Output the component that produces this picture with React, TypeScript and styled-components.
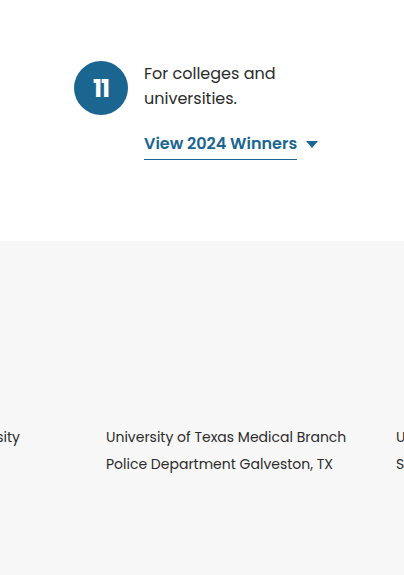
import * as React from "react";
import styled, { createGlobalStyle } from "styled-components";

const GlobalStyle = createGlobalStyle`
  html, body {
    margin: 0;
    padding: 0;
    background: #ffffff;
  }
  body {
    font-family: Poppins, "Open Sans", "Liberation Sans", sans-serif;
    color: #2b2b2b;
    -webkit-font-smoothing: antialiased;
  }
`;

const Page = styled.div`
  width: 404px;
  height: 575px;
  display: flex;
  flex-direction: column;
  overflow: hidden;
`;

const Intro = styled.section`
  height: 241px;
  box-sizing: border-box;
  padding: 61px 0 0 74px;
  background: #ffffff;
`;

const Feature = styled.div`
  display: flex;
  align-items: flex-start;
  gap: 16px;
`;

const Badge = styled.div`
  flex: 0 0 54px;
  width: 54px;
  height: 54px;
  border-radius: 50%;
  background: #1a6690;
  color: #ffffff;
  display: flex;
  align-items: center;
  justify-content: center;
  font-size: 24px;
  font-weight: 700;
  letter-spacing: -1px;
`;

const Copy = styled.div`
  display: flex;
  flex-direction: column;
  align-items: flex-start;
`;

const Lead = styled.p`
  margin: 0;
  font-size: 16px;
  line-height: 25px;
  color: #2b2b2b;
`;

const Toggle = styled.button`
  margin-top: 21px;
  padding: 0;
  border: 0;
  background: none;
  display: flex;
  align-items: center;
  gap: 9px;
  cursor: pointer;
  font-family: inherit;
`;

const ToggleLabel = styled.span`
  font-size: 16px;
  line-height: 24px;
  font-weight: 600;
  color: #1a6690;
  padding-bottom: 3px;
  border-bottom: 1px solid #1a6690;
`;

const Caret = styled.svg`
  width: 12px;
  height: 7px;
  margin-bottom: 3px;
`;

const Winners = styled.section`
  flex: 1;
  background: #f7f7f7;
  padding-top: 183px;
  overflow: hidden;
`;

const Track = styled.div`
  display: flex;
  gap: 30px;
  margin-left: -184px;
`;

const Winner = styled.div`
  flex: 0 0 260px;
  font-size: 14px;
  line-height: 27px;
  color: #2b2b2b;
  white-space: nowrap;
`;

const Line = styled.span`
  display: block;
`;

const winners = [
  ["Pennsylvania State University"],
  ["University of Texas Medical Branch", "Police Department Galveston, TX"],
  ["University of South Florida", "St. Petersburg, FL"],
];

export default function App() {
  return (
    <Page>
      <GlobalStyle />
      <Intro>
        <Feature>
          <Badge>11</Badge>
          <Copy>
            <Lead>
              For colleges and
              <br />
              universities.
            </Lead>
            <Toggle>
              <ToggleLabel>View 2024 Winners</ToggleLabel>
              <Caret viewBox="0 0 12 7">
                <path d="M0 0h12L6 7z" fill="#1a6690" />
              </Caret>
            </Toggle>
          </Copy>
        </Feature>
      </Intro>
      <Winners>
        <Track>
          {winners.map((lines, i) => (
            <Winner key={i}>
              {lines.map((l) => (
                <Line key={l}>{l}</Line>
              ))}
            </Winner>
          ))}
        </Track>
      </Winners>
    </Page>
  );
}
